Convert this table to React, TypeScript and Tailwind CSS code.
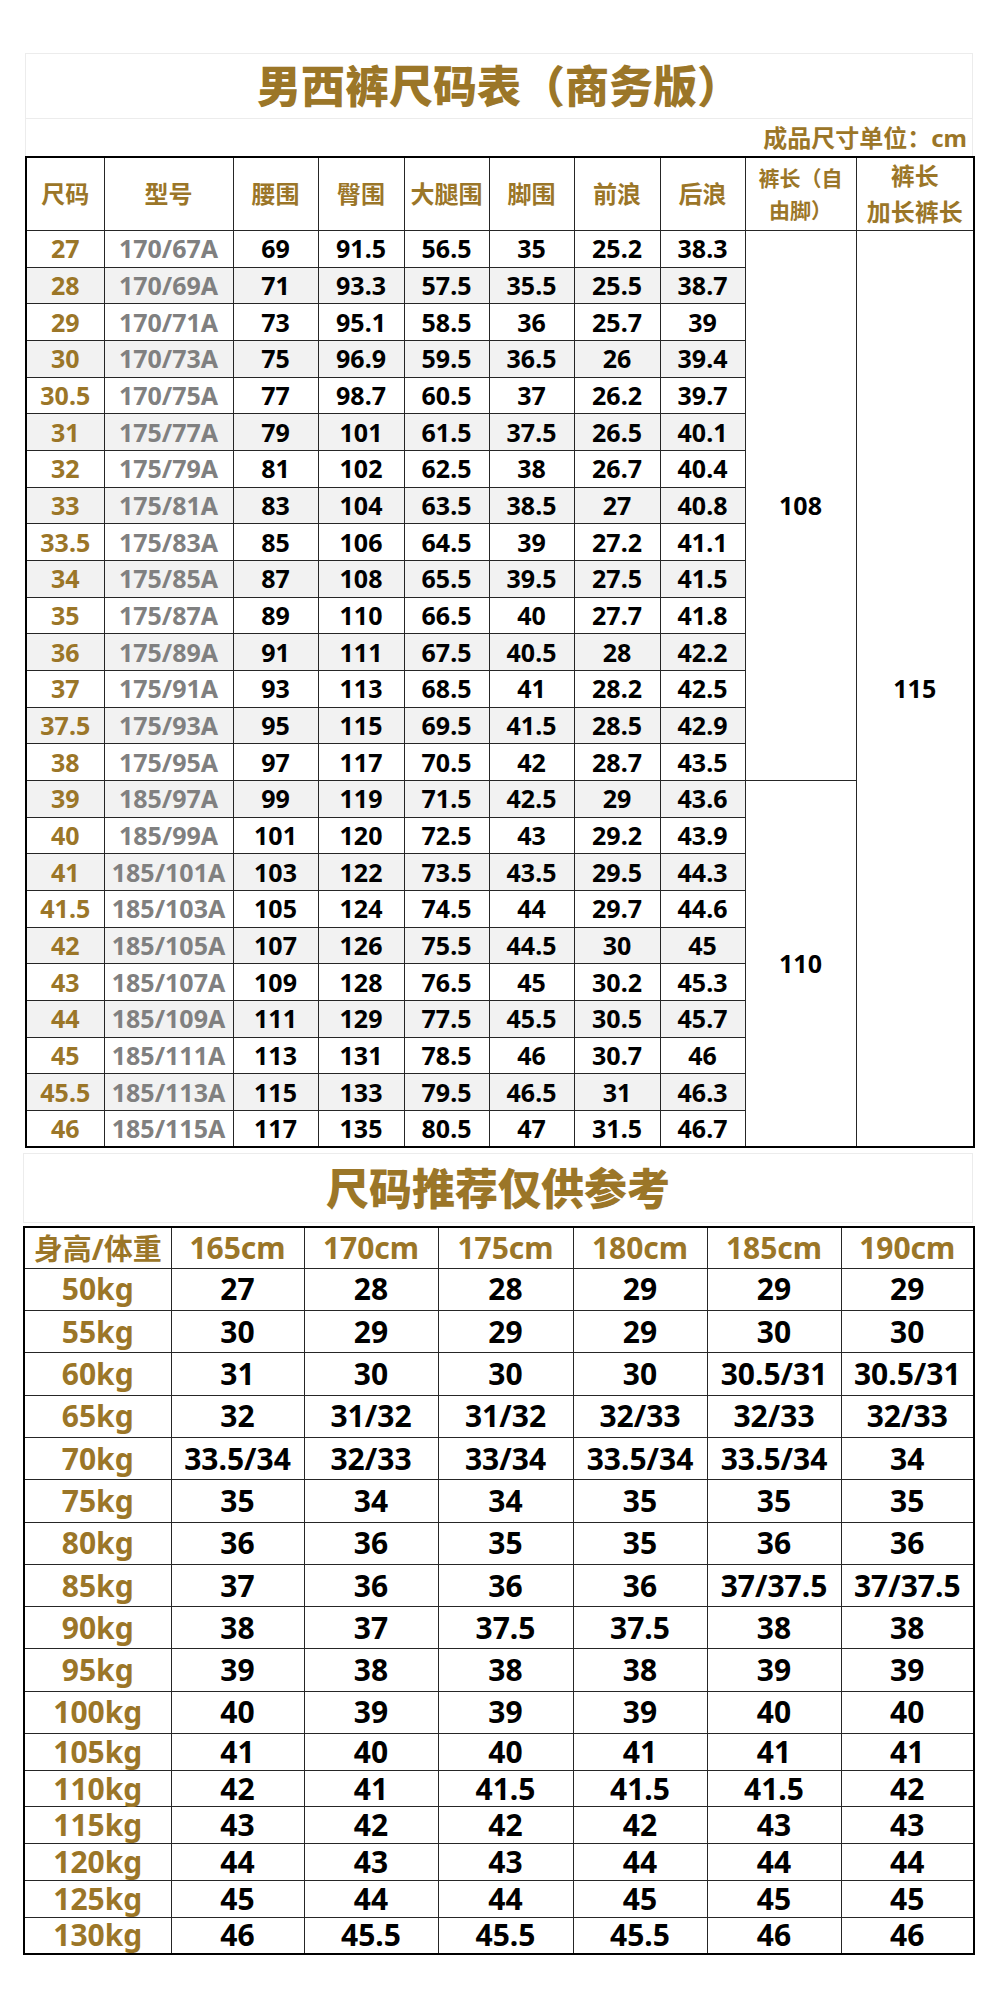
import React from 'react'

const gold = 'text-[#9b7628]'

// size, model, waist, hip, thigh, hem, front rise, back rise
const sizeRows = [
  ['27', '170/67A', '69', '91.5', '56.5', '35', '25.2', '38.3'],
  ['28', '170/69A', '71', '93.3', '57.5', '35.5', '25.5', '38.7'],
  ['29', '170/71A', '73', '95.1', '58.5', '36', '25.7', '39'],
  ['30', '170/73A', '75', '96.9', '59.5', '36.5', '26', '39.4'],
  ['30.5', '170/75A', '77', '98.7', '60.5', '37', '26.2', '39.7'],
  ['31', '175/77A', '79', '101', '61.5', '37.5', '26.5', '40.1'],
  ['32', '175/79A', '81', '102', '62.5', '38', '26.7', '40.4'],
  ['33', '175/81A', '83', '104', '63.5', '38.5', '27', '40.8'],
  ['33.5', '175/83A', '85', '106', '64.5', '39', '27.2', '41.1'],
  ['34', '175/85A', '87', '108', '65.5', '39.5', '27.5', '41.5'],
  ['35', '175/87A', '89', '110', '66.5', '40', '27.7', '41.8'],
  ['36', '175/89A', '91', '111', '67.5', '40.5', '28', '42.2'],
  ['37', '175/91A', '93', '113', '68.5', '41', '28.2', '42.5'],
  ['37.5', '175/93A', '95', '115', '69.5', '41.5', '28.5', '42.9'],
  ['38', '175/95A', '97', '117', '70.5', '42', '28.7', '43.5'],
  ['39', '185/97A', '99', '119', '71.5', '42.5', '29', '43.6'],
  ['40', '185/99A', '101', '120', '72.5', '43', '29.2', '43.9'],
  ['41', '185/101A', '103', '122', '73.5', '43.5', '29.5', '44.3'],
  ['41.5', '185/103A', '105', '124', '74.5', '44', '29.7', '44.6'],
  ['42', '185/105A', '107', '126', '75.5', '44.5', '30', '45'],
  ['43', '185/107A', '109', '128', '76.5', '45', '30.2', '45.3'],
  ['44', '185/109A', '111', '129', '77.5', '45.5', '30.5', '45.7'],
  ['45', '185/111A', '113', '131', '78.5', '46', '30.7', '46'],
  ['45.5', '185/113A', '115', '133', '79.5', '46.5', '31', '46.3'],
  ['46', '185/115A', '117', '135', '80.5', '47', '31.5', '46.7'],
]

const heights = ['165cm', '170cm', '175cm', '180cm', '185cm', '190cm']

const recommend: [string, string[]][] = [
  ['50kg', ['27', '28', '28', '29', '29', '29']],
  ['55kg', ['30', '29', '29', '29', '30', '30']],
  ['60kg', ['31', '30', '30', '30', '30.5/31', '30.5/31']],
  ['65kg', ['32', '31/32', '31/32', '32/33', '32/33', '32/33']],
  ['70kg', ['33.5/34', '32/33', '33/34', '33.5/34', '33.5/34', '34']],
  ['75kg', ['35', '34', '34', '35', '35', '35']],
  ['80kg', ['36', '36', '35', '35', '36', '36']],
  ['85kg', ['37', '36', '36', '36', '37/37.5', '37/37.5']],
  ['90kg', ['38', '37', '37.5', '37.5', '38', '38']],
  ['95kg', ['39', '38', '38', '38', '39', '39']],
  ['100kg', ['40', '39', '39', '39', '40', '40']],
  ['105kg', ['41', '40', '40', '41', '41', '41']],
  ['110kg', ['42', '41', '41.5', '41.5', '41.5', '42']],
  ['115kg', ['43', '42', '42', '42', '43', '43']],
  ['120kg', ['44', '43', '43', '44', '44', '44']],
  ['125kg', ['45', '44', '44', '45', '45', '45']],
  ['130kg', ['46', '45.5', '45.5', '45.5', '46', '46']],
]

const cell = 'border border-[#262626] p-0 text-center align-middle'
const num = 'text-[25px] leading-none font-bold'
const big = 'text-[30px] leading-none font-bold'

const SizeTable = () => (
  <table className="w-[948px] table-fixed border-collapse border-2 border-black">
    <colgroup>
      <col className="w-[78px]" />
      <col className="w-[129px]" />
      <col className="w-[85px]" />
      <col className="w-[86px]" />
      <col className="w-[85px]" />
      <col className="w-[85px]" />
      <col className="w-[86px]" />
      <col className="w-[85px]" />
      <col className="w-[111px]" />
      <col className="w-[118px]" />
    </colgroup>
    <thead>
      <tr className="h-[72px]">
        {['尺码', '型号', '腰围', '臀围', '大腿围', '脚围', '前浪', '后浪'].map((h) => (
          <th key={h} className={`${cell} ${gold} text-[24px] leading-none font-bold`}>
            {h}
          </th>
        ))}
        <th className={`${cell} ${gold} text-[21px] leading-[32px] font-bold`}>
          裤长（自
          <br />
          由脚）
        </th>
        <th className={`${cell} ${gold} text-[24px] leading-[36px] font-bold`}>
          裤长
          <br />
          加长裤长
        </th>
      </tr>
    </thead>
    <tbody>
      {sizeRows.map((r, i) => {
        const shade = i % 2 === 1 ? 'bg-[#f2f2f2]' : 'bg-white'
        return (
          <tr key={r[0]} className="h-[36.68px]">
            <td className={`${cell} ${shade} ${gold} ${num}`}>{r[0]}</td>
            <td className={`${cell} ${shade} text-[#808080] ${num}`}>{r[1]}</td>
            {r.slice(2).map((v, j) => (
              <td key={j} className={`${cell} ${shade} text-black ${num}`}>
                {v}
              </td>
            ))}
            {i === 0 && (
              <td rowSpan={15} className={`${cell} bg-white text-black ${num}`}>
                108
              </td>
            )}
            {i === 15 && (
              <td rowSpan={10} className={`${cell} bg-white text-black ${num}`}>
                110
              </td>
            )}
            {i === 0 && (
              <td rowSpan={25} className={`${cell} bg-white text-black ${num}`}>
                115
              </td>
            )}
          </tr>
        )
      })}
    </tbody>
  </table>
)

const RecommendTable = () => (
  <table className="mt-[3px] w-[950px] table-fixed border-collapse border-2 border-black">
    <colgroup>
      <col className="w-[147px]" />
      <col className="w-[133px]" />
      <col className="w-[134px]" />
      <col className="w-[135px]" />
      <col className="w-[134px]" />
      <col className="w-[134px]" />
      <col className="w-[133px]" />
    </colgroup>
    <thead>
      <tr className="h-[41px]">
        <th className={`${cell} ${gold} text-[29px] leading-none font-bold`}>身高/体重</th>
        {heights.map((h) => (
          <th key={h} className={`${cell} ${gold} ${big}`}>
            {h}
          </th>
        ))}
      </tr>
    </thead>
    <tbody>
      {recommend.map(([w, vals], i) => (
        <tr key={w} className={i < 11 ? 'h-[42.3px]' : 'h-[36.7px]'}>
          <td className={`${cell} ${gold} ${big}`}>{w}</td>
          {vals.map((v, j) => (
            <td key={j} className={`${cell} text-black ${big}`}>
              {v}
            </td>
          ))}
        </tr>
      ))}
    </tbody>
  </table>
)

export default function App() {
  return (
    <div className="min-h-[1989px] w-[1000px] bg-white pt-[53px] font-['Noto_Sans','Noto_Sans_CJK_SC',sans-serif]">
      <div className="ml-[25px] w-[948px]">
        <div className={`flex h-[66px] items-center justify-center border border-[#ececec] text-[44px] leading-none font-black ${gold}`}>
          男西裤尺码表（商务版）
        </div>
        <div className={`flex h-[37px] items-center justify-end border-x border-[#ececec] pr-[5px] text-[24px] leading-none font-bold ${gold}`}>
          成品尺寸单位：cm
        </div>
        <SizeTable />
      </div>

      <div className="mt-[5px] ml-[23px] w-[950px]">
        <div className={`flex h-[70px] items-center justify-center border border-[#ececec] text-[43px] leading-none font-black ${gold}`}>
          尺码推荐仅供参考
        </div>
        <RecommendTable />
      </div>
    </div>
  )
}
